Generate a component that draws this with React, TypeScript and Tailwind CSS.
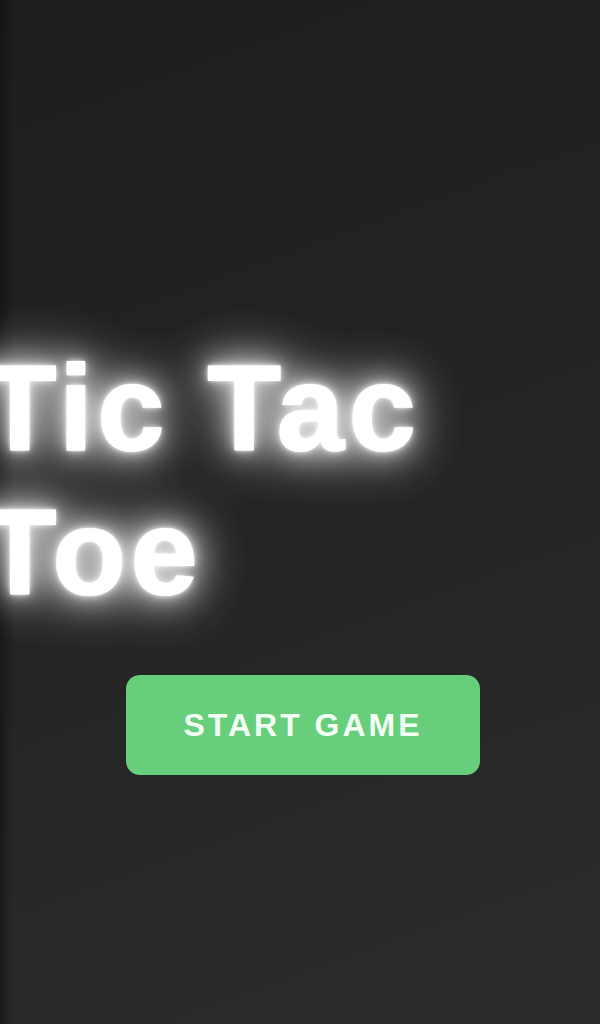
export default function App() {
  return (
    <main className="relative min-h-[1024px] w-full overflow-hidden bg-[linear-gradient(160deg,#1e1e1e_0%,#242424_50%,#2c2c2c_100%)] font-['Liberation_Sans',Arial,sans-serif]">
      {/* darker fade along the left edge */}
      <div className="pointer-events-none absolute inset-y-0 left-0 w-[14px] bg-[linear-gradient(90deg,rgba(0,0,0,0.35),rgba(0,0,0,0))]" />
      <div className="flex flex-col pt-[336px]">
        <h1 className="-ml-[17px] w-[470px] text-[120px] font-bold leading-[144px] tracking-[5px] text-white [-webkit-text-stroke:2px_#fff] [text-shadow:0_0_2px_#fff,0_0_2px_#fff,0_0_5px_#fff,0_0_12px_rgba(255,255,255,0.8)] drop-shadow-[0_0_14px_rgba(255,255,255,0.75)]">
          <span className="drop-shadow-[0_0_26px_rgba(255,255,255,0.55)]">Tic Tac Toe</span>
        </h1>
        <div className="mt-[51px] flex justify-center pl-[6px]">
          <button className="h-[100px] w-[354px] rounded-[14px] bg-[#67cf7b] text-[32px] font-bold tracking-[3px] text-[#f4fff5]">
            START GAME
          </button>
        </div>
      </div>
    </main>
  );
}
